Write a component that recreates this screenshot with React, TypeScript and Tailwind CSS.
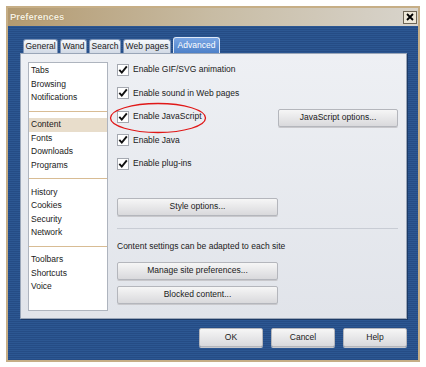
import React from 'react'

const font = { fontFamily: '"Liberation Sans", Arial, sans-serif' }

function Check() {
  return (
    <svg width="12" height="12" viewBox="0 0 12 12" className="shrink-0">
      <rect x="0.5" y="0.5" width="11" height="11" fill="#ffffff" stroke="#a4a8b0" />
      <path d="M2.3 5.8 L4.8 8.6 L9.8 2.4" fill="none" stroke="#111111" strokeWidth="1.9" />
    </svg>
  )
}

function Btn({ label, className }: { label: string; className?: string }) {
  return (
    <div
      className={
        'flex items-center justify-center border border-[#b4b6bc] rounded-[2px] bg-gradient-to-b from-[#f6f6f6] to-[#d9d9dc] text-[8.5px] text-[#1a1a1a] shadow-[0_1px_0_#c8c8cc] ' +
        (className || '')
      }
    >
      {label}
    </div>
  )
}

function CheckRow({ label, children }: { label: string; children?: React.ReactNode }) {
  return (
    <div className="flex items-center h-[23.5px]">
      <Check />
      <span className="ml-[4px] text-[8.5px] text-[#1a1a1a]">{label}</span>
      {children}
    </div>
  )
}

const groups = [
  ['Tabs', 'Browsing', 'Notifications'],
  ['Content', 'Fonts', 'Downloads', 'Programs'],
  ['History', 'Cookies', 'Security', 'Network'],
  ['Toolbars', 'Shortcuts', 'Voice'],
]

const tabs = [
  { name: 'General', w: 'w-[35px]' },
  { name: 'Wand', w: 'w-[27px]' },
  { name: 'Search', w: 'w-[32px]' },
  { name: 'Web pages', w: 'w-[48px]' },
]

export default function App() {
  return (
    <div className="relative w-[426px] h-[367px] bg-white pt-[6px] pl-[6px]" style={font}>
      <div className="w-[414px] h-[356px] border-2 border-[#c6ae86] flex flex-col">
        {/* title bar */}
        <div className="h-[18px] flex items-center justify-between bg-gradient-to-r from-[#b39a70] via-[#c8bca4] to-[#d8d4cc] pl-[2px] pr-[1px]">
          <span className="text-[9.5px] font-bold text-[#f6efdf] [text-shadow:0_0_1px_#8a7450]">Preferences</span>
          <div className="w-[14px] h-[13px] border border-[#6e6656] bg-[#eee8d8] flex items-center justify-center">
            <svg width="8" height="8" viewBox="0 0 8 8">
              <path d="M1 1 L7 7 M7 1 L1 7" stroke="#000" strokeWidth="1.8" />
            </svg>
          </div>
        </div>

        {/* body */}
        <div className="flex-1 pt-[11px] pl-[12px] bg-[repeating-linear-gradient(180deg,#2c5792_0px,#2c5792_1px,#254c85_1px,#254c85_2px)]">
          {/* tabs */}
          <div className="flex items-end h-[16px] ml-[3px] gap-[2px]">
            {tabs.map((t) => (
              <div
                key={t.name}
                className={
                  'h-[14px] flex items-center justify-center rounded-t-[3px] border border-b-0 border-[#7f95b8] bg-gradient-to-b from-[#f6f8fb] to-[#d2dae6] text-[8.5px] text-[#1a1a1a] ' +
                  t.w
                }
              >
                {t.name}
              </div>
            ))}
            <div className="w-[47px] h-[16px] flex items-center justify-center rounded-t-[3px] border border-b-0 border-[#dfe8f6] bg-gradient-to-b from-[#7aa6e4] to-[#4d80c8] text-[8.5px] text-white">
              Advanced
            </div>
          </div>

          {/* panel */}
          <div className="w-[387px] h-[266px] flex border border-[#9aa6b8] bg-gradient-to-b from-[#eef0f4] to-[#e1e4ea] pt-[8px] pl-[7px] pr-[8px] shadow-[1px_1px_0_#1c3a66]">
            {/* category list */}
            <div className="w-[80px] h-[249px] bg-white border border-[#aeb4be] pt-[1px] text-[8.5px] text-[#1a1a1a]">
              {groups.map((g, gi) => (
                <div key={gi}>
                  {gi > 0 && (
                    <div className="h-[13.5px] flex items-center">
                      <div className="w-full h-px bg-[#d8bc94]" />
                    </div>
                  )}
                  {g.map((item) => (
                    <div
                      key={item}
                      className={
                        'h-[13.5px] flex items-center pl-[2px] ' + (item === 'Content' ? 'bg-[#e8ddcb]' : '')
                      }
                    >
                      {item}
                    </div>
                  ))}
                </div>
              ))}
            </div>

            {/* options */}
            <div className="flex-1 ml-[9px] -mt-[4px] flex flex-col">
              <CheckRow label="Enable GIF/SVG animation" />
              <CheckRow label="Enable sound in Web pages" />
              <CheckRow label="Enable JavaScript">
                <Btn label="JavaScript options..." className="ml-auto w-[120px] h-[18px] mt-[2px]" />
              </CheckRow>
              <CheckRow label="Enable Java" />
              <CheckRow label="Enable plug-ins" />

              <Btn label="Style options..." className="w-[161px] h-[18px] mt-[22px]" />
              <div className="h-px bg-[#c8ccd4] mt-[12px]" />
              <div className="mt-[11px] h-[13px] flex items-center text-[8.5px] text-[#1a1a1a]">
                Content settings can be adapted to each site
              </div>
              <Btn label="Manage site preferences..." className="w-[161px] h-[18px] mt-[9px]" />
              <Btn label="Blocked content..." className="w-[161px] h-[18px] mt-[6px]" />
            </div>
          </div>

          {/* dialog buttons */}
          <div className="w-[387px] flex justify-end gap-[8px] mt-[9px]">
            <Btn label="OK" className="w-[64px] h-[19px]" />
            <Btn label="Cancel" className="w-[64px] h-[19px]" />
            <Btn label="Help" className="w-[64px] h-[19px]" />
          </div>
        </div>
      </div>

      {/* red annotation ring */}
      <svg className="absolute left-[109px] top-[102px]" width="98" height="32" viewBox="0 0 98 32">
        <ellipse cx="49" cy="16" rx="47.5" ry="14.5" fill="none" stroke="#e01818" strokeWidth="1.3" />
      </svg>
    </div>
  )
}
